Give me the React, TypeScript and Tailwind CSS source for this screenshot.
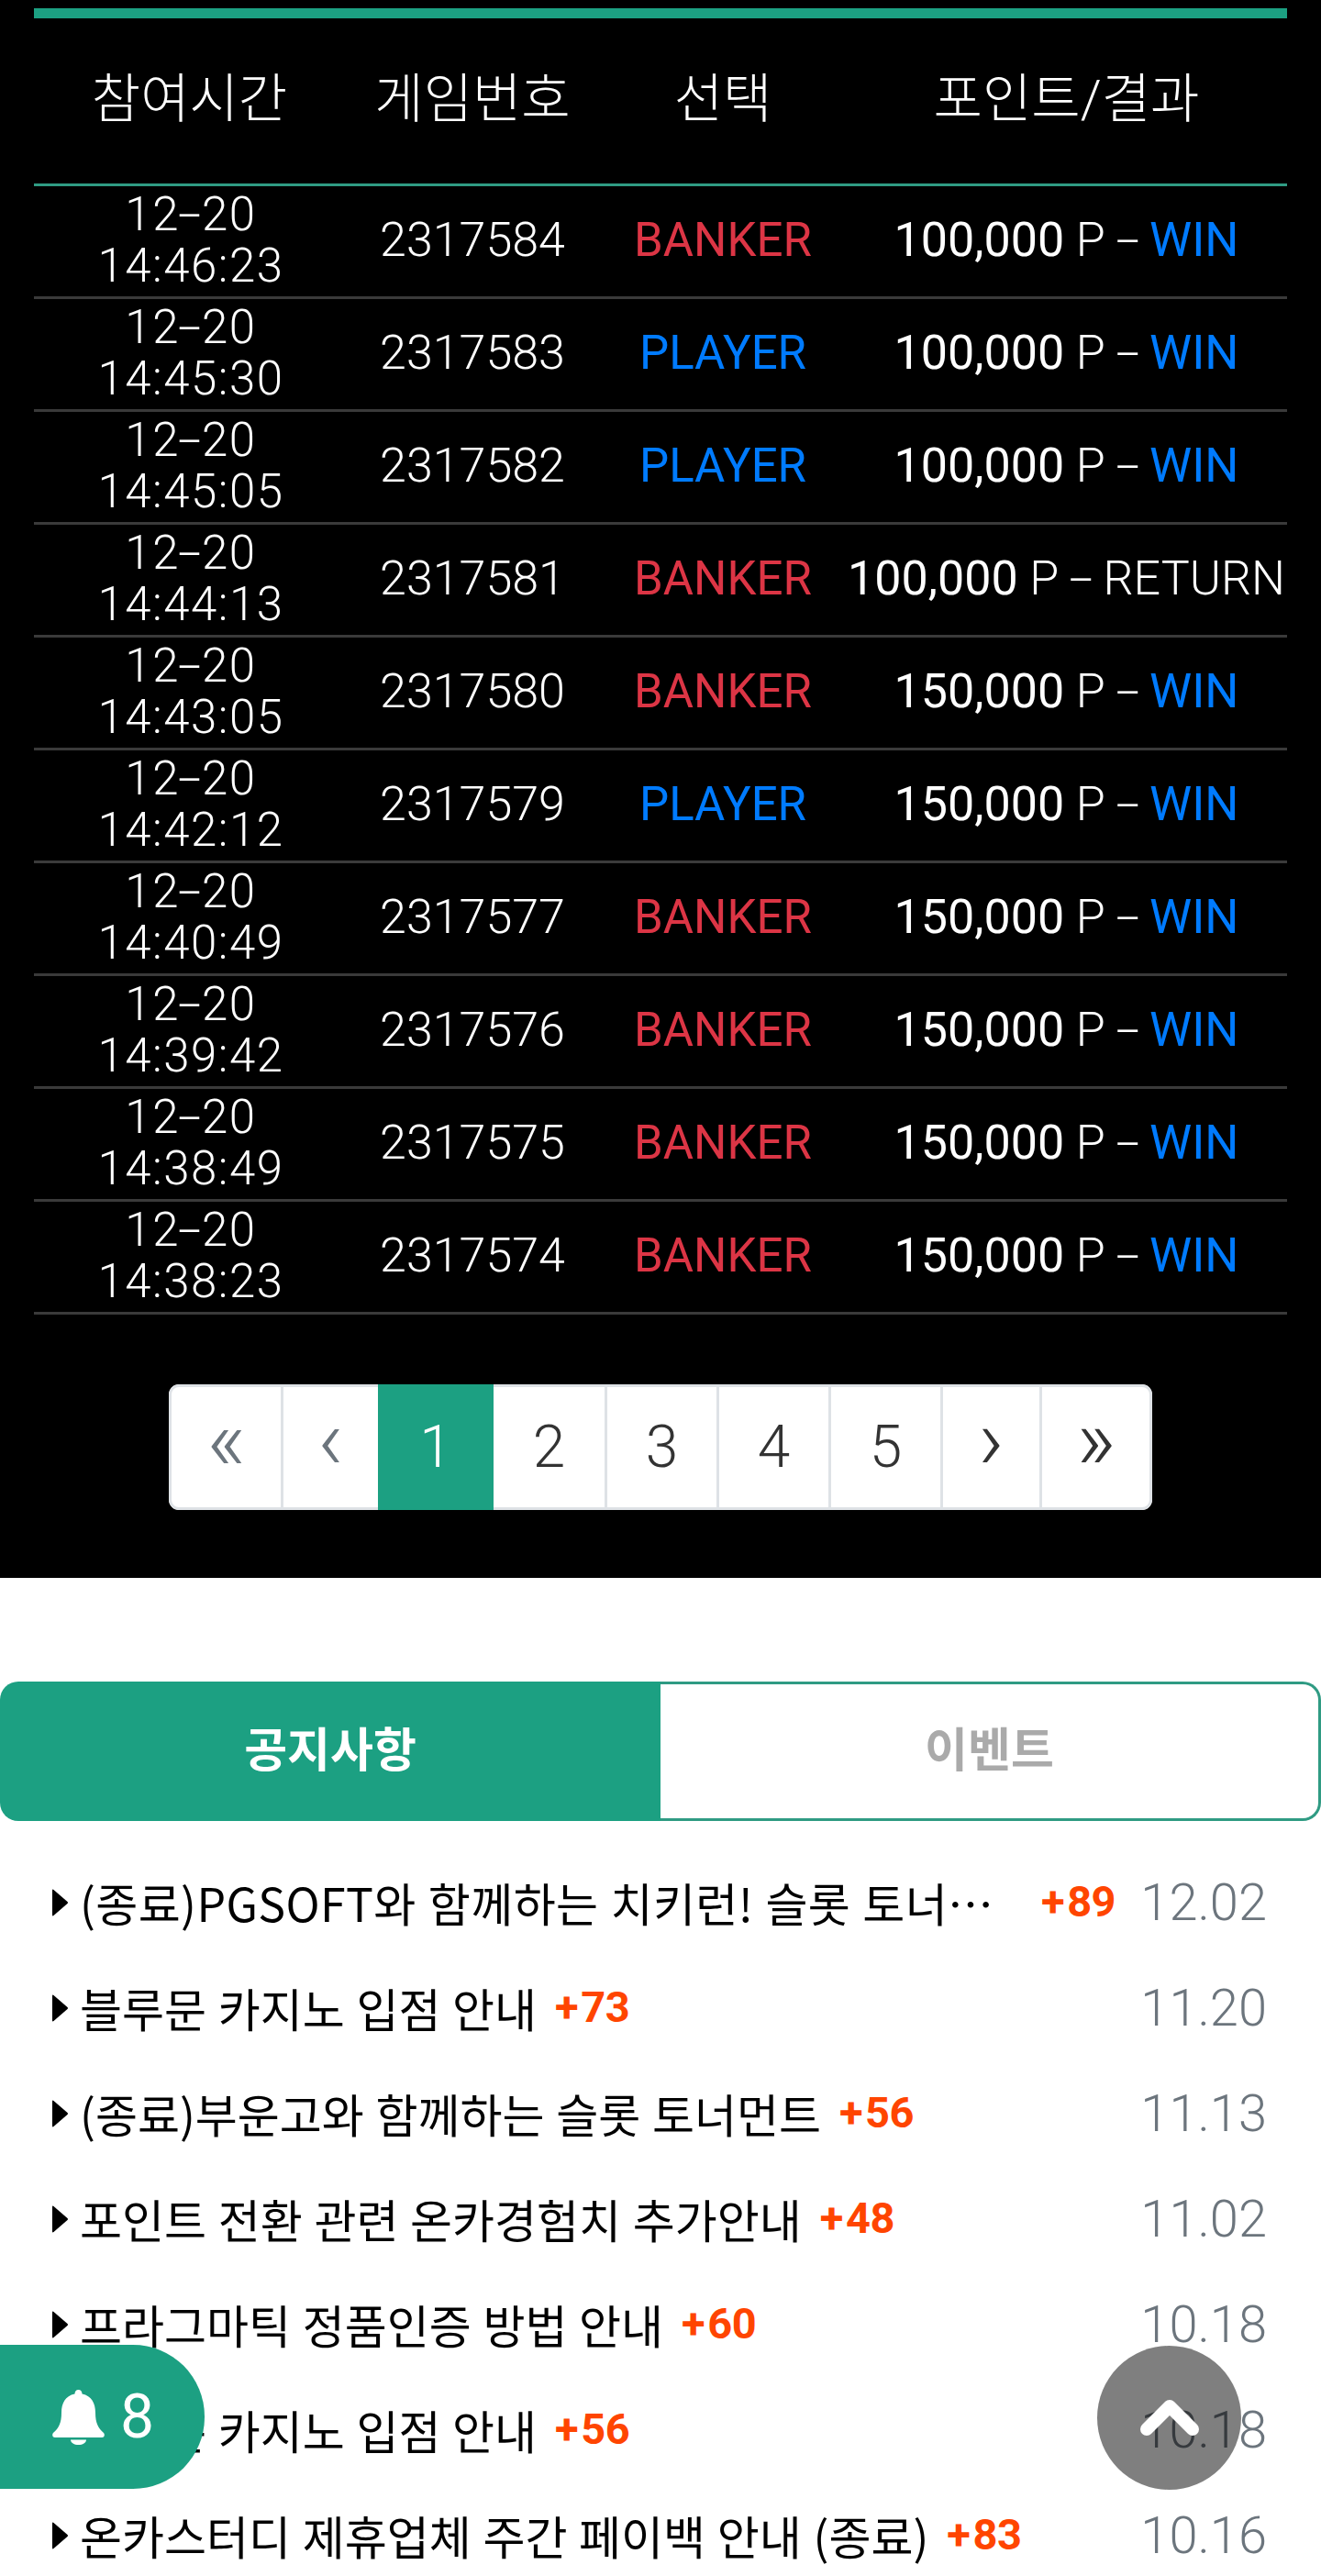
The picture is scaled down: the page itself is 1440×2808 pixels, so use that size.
const bets = [
  { time: '14:46:23', id: '2317584', pick: 'BANKER', point: '100,000', result: 'WIN' },
  { time: '14:45:30', id: '2317583', pick: 'PLAYER', point: '100,000', result: 'WIN' },
  { time: '14:45:05', id: '2317582', pick: 'PLAYER', point: '100,000', result: 'WIN' },
  { time: '14:44:13', id: '2317581', pick: 'BANKER', point: '100,000', result: 'RETURN' },
  { time: '14:43:05', id: '2317580', pick: 'BANKER', point: '150,000', result: 'WIN' },
  { time: '14:42:12', id: '2317579', pick: 'PLAYER', point: '150,000', result: 'WIN' },
  { time: '14:40:49', id: '2317577', pick: 'BANKER', point: '150,000', result: 'WIN' },
  { time: '14:39:42', id: '2317576', pick: 'BANKER', point: '150,000', result: 'WIN' },
  { time: '14:38:49', id: '2317575', pick: 'BANKER', point: '150,000', result: 'WIN' },
  { time: '14:38:23', id: '2317574', pick: 'BANKER', point: '150,000', result: 'WIN' },
]

const notices = [
  { title: '(종료)PGSOFT와 함께하는 치키런! 슬롯 토너먼트 이벤트 안내', count: 89, date: '12.02', long: true },
  { title: '블루문 카지노 입점 안내', count: 73, date: '11.20' },
  { title: '(종료)부운고와 함께하는 슬롯 토너먼트', count: 56, date: '11.13' },
  { title: '포인트 전환 관련 온카경험치 추가안내', count: 48, date: '11.02' },
  { title: '프라그마틱 정품인증 방법 안내', count: 60, date: '10.18' },
  { title: '블루문 카지노 입점 안내', count: 56, date: '10.18' },
  { title: '온카스터디 제휴업체 주간 페이백 안내 (종료)', count: 83, date: '10.16' },
]

const pages = [
  { label: '«', width: 'w-[122px]', color: 'text-[#6c757d]', arrow: true },
  { label: '‹', width: 'w-[106px]', color: 'text-[#6c757d]', arrow: true },
  { label: '1', width: 'w-[126px]', color: 'text-white', active: true },
  { label: '2', width: 'w-[121px]', color: 'text-[#333333]' },
  { label: '3', width: 'w-[122px]', color: 'text-[#333333]' },
  { label: '4', width: 'w-[122px]', color: 'text-[#333333]' },
  { label: '5', width: 'w-[122px]', color: 'text-[#333333]' },
  { label: '›', width: 'w-[108px]', color: 'text-[#333333]', arrow: true },
  { label: '»', width: 'w-[123px]', color: 'text-[#333333]', arrow: true },
]

// the hyphen is wider in the reference than in Roboto
const Dash = () => <span className="mx-[4px] inline-block scale-x-[1.8]">-</span>

const App = () => {
  return (
    <div className="relative h-[2808px] overflow-hidden bg-white font-['Roboto','Noto_Sans_CJK_KR',sans-serif] font-light">
      <section className="h-[1720px] bg-black px-[37px] pt-[9px] text-white">
        <table className="w-full table-fixed border-collapse border-t-[11px] border-[#1ca082]">
          <colgroup>
            <col className="w-[339px]" />
            <col className="w-[278px]" />
            <col className="w-[268px]" />
            <col />
          </colgroup>
          <thead>
            <tr className="h-[187px] border-b-[3px] border-[#2f9b83] text-[58px] leading-[64px]">
              <th className="pb-[4px] font-light">참여시간</th>
              <th className="pb-[4px] font-light">게임번호</th>
              <th className="pb-[4px] font-light">선택</th>
              <th className="pb-[4px] font-light">포인트/결과</th>
            </tr>
          </thead>
          <tbody>
            {bets.map((bet) => (
              <tr key={bet.id} className="h-[123px] border-b-[3px] border-[#3a3a3a] text-center text-[52px] leading-[56px]">
                <td className="pb-[3px] pl-[3px] text-[51px] tracking-[1.5px]">
                  12<Dash />20
                  <br />
                  {bet.time}
                </td>
                <td className="pb-[3px]">{bet.id}</td>
                <td className={`pb-[3px] text-[51px] font-normal ${bet.pick === 'BANKER' ? 'text-[#dc3545]' : 'text-[#007bff]'}`}>{bet.pick}</td>
                <td className="whitespace-nowrap pb-[3px]">
                  <span className="font-normal">{bet.point}</span> P <Dash />{' '}
                  <span className={bet.result === 'WIN' ? 'font-normal text-[#007bff]' : ''}>{bet.result}</span>
                </td>
              </tr>
            ))}
          </tbody>
        </table>

        <nav className="mt-[76px] flex justify-center">
          <ul className="flex h-[137px] overflow-hidden rounded-[11px] bg-white">
            {pages.map((page, index) => (
              <li
                key={page.label}
                className={`flex items-center justify-center border-y-[3px] ${page.arrow ? 'pb-[14px] text-[94px]' : 'text-[64px]'} ${page.width} ${page.color} ${
                  page.active ? 'border-[#1ca082] bg-[#1ca082]' : 'border-[#dee2e6]'
                } ${index === 0 ? 'rounded-l-[11px] border-l-[3px]' : ''} ${
                  index === pages.length - 1 ? 'rounded-r-[11px] border-r-[3px]' : ''
                } ${index > 0 && !page.active && !pages[index - 1].active ? 'border-l-[3px]' : ''}`}
              >
                {page.label}
              </li>
            ))}
          </ul>
        </nav>
      </section>

      <div className="mt-[113px] flex h-[152px] text-[51px] font-bold">
        <button type="button" className="w-1/2 rounded-l-[20px] bg-[#1ca082] text-white">
          공지사항
        </button>
        <button
          type="button"
          className="w-1/2 rounded-r-[20px] border-y-[3px] border-r-[3px] border-[#2f9b83] bg-white text-[#aaaaaa]"
        >
          이벤트
        </button>
      </div>

      <ul className="mt-[31px] pl-[57px] pr-[59px]">
        {notices.map((notice, index) => (
          <li key={index} className="flex h-[115px] items-center">
            <svg viewBox="0 0 17 30" className="mr-[13px] h-[30px] w-[17px] shrink-0" fill="#000000">
              <path d="M0 1.5 Q0 0 1.5 1 L16.5 14 Q17.5 15 16.5 16 L1.5 29 Q0 30 0 28.5 Z" />
            </svg>
            <span className={`pb-[2px] font-['Noto_Sans_CJK_KR',sans-serif] text-[50px] font-normal leading-[64px] whitespace-nowrap text-black [word-spacing:1.5px] ${notice.long ? 'w-[998px] shrink-0 truncate tracking-[0.4px]' : ''}`}>
              {notice.title}
            </span>
            <span className={`${notice.long ? 'ml-[50px]' : 'ml-[20px]'} whitespace-nowrap text-[47px] font-bold tracking-[-0.5px] text-[#ff4500]`}>
              <span className="mr-[3px]">+</span>
              {notice.count}
            </span>
            <span className="ml-auto text-[56px] text-[#6c757d]">{notice.date}</span>
          </li>
        ))}
      </ul>

      <button
        type="button"
        className="absolute left-0 top-[2556px] flex h-[157px] w-[223px] items-center rounded-r-[78px] bg-[#1ca082] pl-[57px] text-white"
      >
        <svg viewBox="0 0 57 60" className="h-[60px] w-[57px]" fill="#ffffff">
          <path d="M28.5 0 C31 0 32.5 2 32.5 4.5 C43 6.5 47 15 47 25 C47 36 50 42 56 47 C57.5 48.5 57 52 54 52 L3 52 C0 52 -0.5 48.5 1 47 C7 42 10 36 10 25 C10 15 14 6.5 24.5 4.5 C24.5 2 26 0 28.5 0 Z" />
          <path d="M20 54.5 L37 54.5 C37 58 33 60 28.5 60 C24 60 20 58 20 54.5 Z" />
        </svg>
        <span className="ml-[17px] text-[66px] font-normal">8</span>
      </button>

      <button
        type="button"
        className="absolute left-[1196px] top-[2557px] flex h-[157px] w-[157px] items-center justify-center rounded-full bg-black/50"
      >
        <svg viewBox="0 0 64 42" className="h-[42px] w-[64px]" fill="none" stroke="#ffffff" strokeWidth="14" strokeLinejoin="round" strokeLinecap="round">
          <path d="M7 33 L32 8 L57 33" />
        </svg>
      </button>
    </div>
  )
}

export default App
